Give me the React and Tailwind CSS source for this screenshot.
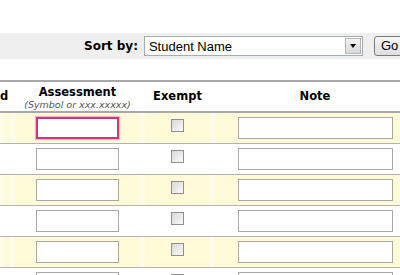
import React from "react";

const rows = [0, 1, 2, 3, 4, 5];

function Checkbox() {
  return (
    <div className="w-[13px] h-[13px] border border-[#8f8f8f] bg-gradient-to-br from-[#d8d8d8] to-[#fafafa]" />
  );
}

function TextBox({ focused, className }) {
  return focused ? (
    <div className={`h-[22px] border-2 border-[#c8387a] shadow-[0_0_1px_1px_#f3b6d0] bg-white ${className}`} />
  ) : (
    <div className={`h-[22px] border border-[#a9a9a3] bg-white ${className}`} />
  );
}

export default function App() {
  return (
    <div className="w-[400px] h-[275px] overflow-hidden bg-white font-['DejaVu_Sans',sans-serif] text-black">
      {/* Sort toolbar */}
      <div className="mt-[33px] h-[26px] bg-[#efefef] flex items-center pl-[84px] overflow-hidden">
        <span className="text-[12px] font-bold whitespace-nowrap">Sort by:</span>
        <div className="ml-[6px] w-[219px] h-[20px] shrink-0 border border-[#a5acb2] bg-white flex items-center">
          <span className="flex-1 pl-[4px] font-['Liberation_Sans',sans-serif] text-[13px] leading-none">Student Name</span>
          <div className="w-[16px] h-[16px] mr-[1px] border border-[#b5b5b5] bg-gradient-to-b from-[#f4f4f4] to-[#d8d8d8] flex items-center justify-center">
            <div className="w-0 h-0 border-x-[3px] border-x-transparent border-t-[4px] border-t-black" />
          </div>
        </div>
        <div className="ml-[11px] w-[36px] h-[20px] shrink-0 rounded-[3px] border border-[#7a7a7a] bg-gradient-to-b from-[#f6f6f6] to-[#dedede] flex items-center pl-[6px] font-['Liberation_Sans',sans-serif] text-[13px]">
          Go
        </div>
      </div>

      {/* Grade table */}
      <div className="mt-[21px] border-t-2 border-[#a8a8a8]">
        <div className="h-[31px] flex border-b-2 border-[#a8a8a8]">
          <div className="w-[15px] shrink-0 flex items-center text-[11.5px] font-bold">d</div>
          <div className="w-[125px] shrink-0 flex flex-col items-center pt-[4px]">
            <span className="text-[11.5px] font-bold leading-[13px]">Assessment</span>
            <span className="text-[9.5px] italic text-[#555] leading-[12px] whitespace-nowrap">(Symbol or xxx.xxxxx)</span>
          </div>
          <div className="w-[75px] shrink-0 flex items-center justify-center text-[11.5px] font-bold">Exempt</div>
          <div className="w-[200px] shrink-0 flex items-center justify-center text-[11.5px] font-bold">Note</div>
        </div>

        {rows.map((i) => (
          <div
            key={i}
            className={`h-[31px] flex border-b border-[#b2b2b2] ${i % 2 === 0 ? "bg-[#fffbd8]" : "bg-white"}`}
          >
            <div className={`w-[15px] shrink-0 ${i % 2 === 0 ? "border-l-[4px] border-r-[5px] border-[#fffde9]" : ""}`} />
            <div className="w-[125px] shrink-0 flex justify-center pt-[4px]">
              <TextBox focused={i === 0} className="w-[83px]" />
            </div>
            <div className={`w-[75px] shrink-0 flex justify-center pt-[6px] ${i % 2 === 0 ? "border-x-[5px] border-[#fffde9]" : ""}`}>
              <Checkbox />
            </div>
            <div className="w-[200px] shrink-0 flex justify-center pt-[4px]">
              <TextBox className="w-[155px]" />
            </div>
          </div>
        ))}
      </div>
    </div>
  );
}
